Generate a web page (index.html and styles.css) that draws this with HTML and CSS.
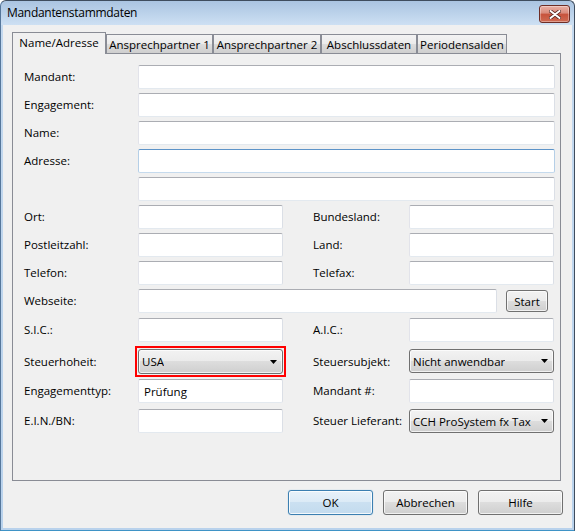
FILE: index.html
```html
<!DOCTYPE html>
<html lang="de">
<head>
<meta charset="utf-8">
<title>Mandantenstammdaten</title>
<link rel="stylesheet" href="styles.css">
</head>
<body>
<div class="window">
  <div class="titlebar">
    <span class="title">Mandantenstammdaten</span>
    <div class="close">
      <svg width="12" height="9" viewBox="0 0 12 9">
        <path d="M1.5 1 L10.5 8 M10.5 1 L1.5 8" stroke="#5b2a24" stroke-width="3.6" stroke-linecap="round" fill="none"/>
        <path d="M1.5 1 L10.5 8 M10.5 1 L1.5 8" stroke="#ffffff" stroke-width="2" stroke-linecap="round" fill="none"/>
      </svg>
    </div>
  </div>
  <div class="client">
    <div class="tabs">
      <div class="tab tab-name active">Name/Adresse</div>
      <div class="tab tab-ap1">Ansprechpartner 1</div>
      <div class="tab tab-ap2">Ansprechpartner 2</div>
      <div class="tab tab-abs">Abschlussdaten</div>
      <div class="tab tab-per">Periodensalden</div>
    </div>
    <div class="panel">
      <div class="form">
        <div class="row"><span class="label">Mandant:</span><div class="field wide"></div></div>
        <div class="row"><span class="label">Engagement:</span><div class="field wide"></div></div>
        <div class="row"><span class="label">Name:</span><div class="field wide"></div></div>
        <div class="row"><span class="label">Adresse:</span><div class="field wide focused"></div></div>
        <div class="row"><span class="label"></span><div class="field wide"></div></div>
        <div class="row"><span class="label">Ort:</span><div class="field"></div><span class="label label2">Bundesland:</span><div class="field field2"></div></div>
        <div class="row"><span class="label">Postleitzahl:</span><div class="field"></div><span class="label label2">Land:</span><div class="field field2"></div></div>
        <div class="row"><span class="label">Telefon:</span><div class="field"></div><span class="label label2">Telefax:</span><div class="field field2"></div></div>
        <div class="row"><span class="label">Webseite:</span>
          <div class="web">
            <div class="field web-field"></div>
            <button class="btn btn-start">Start</button>
          </div>
        </div>
        <div class="row row-sic"><span class="label">S.I.C.:</span><div class="field"></div><span class="label label2">A.I.C.:</span><div class="field field2"></div></div>
        <div class="row row-tax"><span class="label">Steuerhoheit:</span>
          <div class="mark">
            <div class="combo combo-tall"><span class="combo-text">USA</span><svg class="arrow" width="7" height="4" viewBox="0 0 7 4"><polygon points="0,0 7,0 3.5,4" fill="#000"/></svg></div>
          </div>
          <span class="label label2">Steuersubjekt:</span>
          <div class="combo field2"><span class="combo-text">Nicht anwendbar</span><svg class="arrow" width="7" height="4" viewBox="0 0 7 4"><polygon points="0,0 7,0 3.5,4" fill="#000"/></svg></div>
        </div>
        <div class="row row-etyp"><span class="label">Engagementtyp:</span><div class="field">Prüfung</div><span class="label label2">Mandant #:</span><div class="field field2"></div></div>
        <div class="row row-ein"><span class="label">E.I.N./BN:</span><div class="field"></div><span class="label label2">Steuer Lieferant:</span>
          <div class="combo field2"><span class="combo-text">CCH ProSystem fx Tax</span><svg class="arrow" width="7" height="4" viewBox="0 0 7 4"><polygon points="0,0 7,0 3.5,4" fill="#000"/></svg></div>
        </div>
      </div>
    </div>
    <div class="buttons">
      <button class="btn btn-dlg btn-default">OK</button>
      <button class="btn btn-dlg">Abbrechen</button>
      <button class="btn btn-dlg">Hilfe</button>
    </div>
  </div>
</div>
</body>
</html>
```
FILE: styles.css
```css
* { box-sizing: border-box; }
html, body { margin: 0; padding: 0; }
body {
  width: 575px;
  height: 531px;
  overflow: hidden;
  font-family: "Open Sans", "Noto Sans", sans-serif;
  font-size: 11.5px;
  color: #000;
  background: #ffffff;
}
.window {
  width: 575px;
  height: 531px;
  border: 1px solid #3f4d5e;
  border-bottom-color: #3f93c6;
  border-left-color: #56779b;
  border-radius: 6px 6px 0 0;
  background: linear-gradient(#aac4e1, #cde0f3 24px, #c4d9ef 24px, #b9d2ec);
  display: flex;
  flex-direction: column;
}
.titlebar {
  height: 24px;
  display: flex;
  justify-content: space-between;
  align-items: flex-start;
  padding: 0 4px 0 6px;
}
.title {
  line-height: 24px;
  font-size: 12px;
  letter-spacing: -0.3px;
}
.close {
  margin-top: 4px;
  width: 31px;
  height: 18px;
  border: 1px solid #6e2d25;
  border-radius: 3px;
  background: linear-gradient(#eab0a5, #d98a7a 45%, #c7533c 50%, #cf6a52);
  box-shadow: inset 0 0 0 1px rgba(255, 255, 255, 0.35);
  display: flex;
  align-items: center;
  justify-content: center;
}
.client {
  flex: 1;
  margin: 0 2px 2px;
  background: #f0f0f0;
  padding: 7px 11px 0 9px;
  display: flex;
  flex-direction: column;
}
.tabs {
  display: flex;
  align-items: flex-end;
  height: 21px;
}
.tab {
  height: 19px;
  border: 1px solid #898c95;
  border-bottom: none;
  background: linear-gradient(#f3f3f3, #ebebeb 50%, #dddddd 50%, #cfcfcf);
  display: flex;
  align-items: center;
  justify-content: center;
  white-space: nowrap;
}
.tab.active {
  height: 22px;
  margin-bottom: -1px;
  padding-bottom: 2px;
  background: #f0f0f0;
  position: relative;
  z-index: 1;
}
.tab-name { width: 94px; }
.tab-ap1 { width: 107px; }
.tab-ap2 { width: 108px; }
.tab-abs { width: 96px; }
.tab-per { width: 90px; }
.panel {
  height: 428px;
  border: 1px solid #898c95;
  background: #f0f0f0;
  padding: 11px 0 0 11px;
}
.form {
  display: flex;
  flex-direction: column;
  gap: 4px;
}
.row {
  display: grid;
  grid-template-columns: 114px 145px 30px 96px 145px;
  height: 24px;
  align-items: center;
}
.row-sic { margin-top: 1px; }
.row-tax { margin-top: 3px; height: 25px; align-items: start; }
.row-tax .label { align-self: center; }
.row-etyp { margin-top: 1px; }
.row-ein { margin-top: 2px; }
.label {
  grid-column: 1;
  white-space: nowrap;
  padding-bottom: 1px;
}
.label2 { grid-column: 4; }
.field {
  grid-column: 2;
  height: 24px;
  background: #ffffff;
  border: 1px solid;
  border-color: #abadb3 #dbdfe6 #e3e9ef #e2e3ea;
  border-radius: 2px;
  padding: 0 5px;
  display: flex;
  align-items: center;
}
.field2 { grid-column: 5; }
.wide { grid-column: 2 / 6; width: 417px; }
.focused { border-color: #5c93c8 #b5cfe7 #c5daed #b5cfe7; }
.web {
  grid-column: 2 / 6;
  display: flex;
  align-items: center;
}
.web-field { width: 359px; }
.btn {
  font: inherit;
  color: #000;
  border: 1px solid #707070;
  border-radius: 3px;
  background: linear-gradient(#f2f2f2, #ebebeb 50%, #dddddd 50%, #cfcfcf);
  box-shadow: inset 0 0 0 1px rgba(255, 255, 255, 0.7);
  padding: 0;
  display: flex;
  align-items: center;
  justify-content: center;
}
.btn-start {
  width: 42px;
  height: 22px;
  margin-left: 9px;
}
.mark {
  grid-column: 2;
  outline: 2px solid #ff0000;
  outline-offset: 1px;
}
.combo {
  height: 24px;
  border: 1px solid #707070;
  border-radius: 3px;
  background: linear-gradient(#f2f2f2, #ebebeb 50%, #dddddd 50%, #cfcfcf);
  box-shadow: inset 0 0 0 1px rgba(255, 255, 255, 0.7);
  display: flex;
  align-items: center;
  justify-content: space-between;
  padding: 0 5px 0 3px;
  overflow: hidden;
}
.combo-tall { height: 25px; }
.combo-text {
  white-space: nowrap;
  overflow: hidden;
}
.arrow { flex: none; margin-left: 3px; }
.buttons {
  margin-top: 9px;
  margin-right: -2px;
  display: flex;
  justify-content: flex-end;
  gap: 10px;
}
.btn-dlg {
  width: 85px;
  height: 25px;
}
.btn-default {
  border-color: #3c7fb1;
  background: linear-gradient(#e8f2fa, #dbeaf6 50%, #cbe0f1 50%, #c3dbee);
  box-shadow: inset 0 0 0 1px rgba(255, 255, 255, 0.8), 0 0 1px 0 #7fb8e0;
}
```
